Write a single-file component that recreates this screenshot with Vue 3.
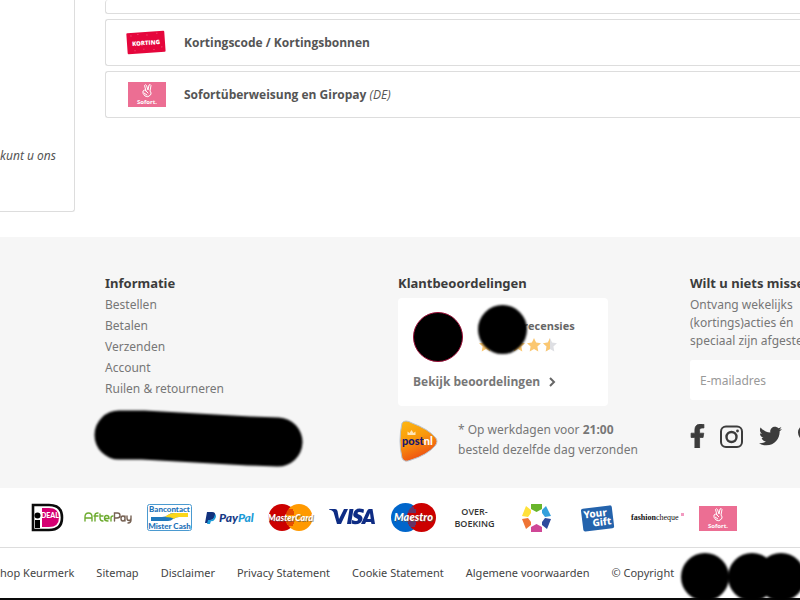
<script setup>
import { ref } from "vue";

const email = ref("");

const infoLinks = ["Bestellen", "Betalen", "Verzenden", "Account", "Ruilen & retourneren"];

const bottomLinks = [
  "hop Keurmerk",
  "Sitemap",
  "Disclaimer",
  "Privacy Statement",
  "Cookie Statement",
  "Algemene voorwaarden",
];

// star outline, 14x14
const star = "M7 0L9.100 4.600L14 5.200L10.400 8.600L11.300 13.500L7 11.100L2.700 13.500L3.600 8.600L0 5.200L4.900 4.600Z";
</script>

<template>
  <div class="page">
    <main class="top">
      <aside class="side">
        <em>kunt u ons</em>
      </aside>
      <ul class="methods">
        <li class="method first"></li>
        <li class="method">
          <svg width="40" height="25" viewBox="0 0 40 25">
            <g transform="rotate(-4 20 13)">
              <rect x="1" y="2" width="38" height="21" rx="1" fill="#e5063c" />
              <path d="M5 5h1M12 4h1M21 5h1M31 4h1M8 20h1M17 19h1M27 20h1M35 18h1" stroke="#f45f80" />
              <text x="20" y="15" text-anchor="middle" font-size="6" font-weight="800" fill="#fff">KORTING</text>
            </g>
          </svg>
          <strong>Kortingscode / Kortingsbonnen</strong>
        </li>
        <li class="method">
          <svg width="40" height="25" viewBox="0 0 40 25">
            <rect x="2" y="0" width="38" height="25" fill="#ec6e93" />
            <g fill="none" stroke="#fff" stroke-linecap="round" stroke-linejoin="round">
              <path d="M20 9L18.500 3.500Q19.500 2 20.500 3.500L22 8L23 3Q24.500 2 25 3.500L24 9Q26 11 24.500 13Q22 16 19 14Q16 11 17 9Q19 7 20 9L22 11M18 11L21 13" />
            </g>
            <text x="21" y="22" text-anchor="middle" font-size="6" font-weight="700" fill="#fff">Sofort.</text>
          </svg>
          <span><strong>Sofortüberweisung en Giropay</strong> <em>(DE)</em></span>
        </li>
      </ul>
    </main>

    <footer>
      <div class="columns">
        <section>
          <h3>Informatie</h3>
          <ul class="info">
            <li v-for="link in infoLinks" :key="link"><a href="#">{{ link }}</a></li>
          </ul>
          <svg class="pill" width="220" height="66" viewBox="0 0 220 66">
            <path d="M30 31L54 31L160 37L189 38" fill="none" stroke="#000" stroke-width="49" stroke-linecap="round" stroke-linejoin="round" />
          </svg>
        </section>

        <section>
          <h3>Klantbeoordelingen</h3>
          <div class="reviews">
            <div class="score">
              <div class="avatar"></div>
              <div class="rating">
                <strong>recensies</strong>
                <svg width="80" height="14" viewBox="0 0 80 14">
                  <g fill="#fbc770">
                    <path v-for="n in 4" :key="n" :d="star" :transform="`translate(${(n - 1) * 16} 0)`" />
                  </g>
                  <path :d="star" fill="#dedfe3" transform="translate(64 0)" />
                  <path d="M71 0L68.900 4.600L64 5.200L67.600 8.600L66.700 13.500L71 11.100Z" fill="#fbc770" />
                </svg>
              </div>
              <div class="dot"></div>
            </div>
            <a href="#" class="more">
              Bekijk beoordelingen
              <svg width="8" height="10" viewBox="0 0 8 10">
                <path d="M2 1L6 5L2 9" fill="none" stroke="#666" stroke-width="2" />
              </svg>
            </a>
          </div>
          <div class="shipping">
            <svg width="40" height="42" viewBox="0 0 40 42">
              <defs>
                <linearGradient id="post" x1="0" y1="0" x2="0.400" y2="1">
                  <stop offset="0" stop-color="#fdb813" />
                  <stop offset="0.500" stop-color="#f99a0c" />
                  <stop offset="1" stop-color="#ee4f12" />
                </linearGradient>
              </defs>
              <path d="M4 3Q7 -1 14 3Q30 9 37 17Q41 21 37 26Q29 35 13 40Q6 43 4 38Q0 21 4 3Z" fill="url(#post)" stroke="#b9c3d0" />
              <path d="M9.500 15V11.500L11.500 13L13.500 10L15.500 13L17.500 11.500V15Z" fill="#fde5b8" />
              <text x="4" y="25" font-size="11" font-weight="900" fill="#17176b" class="lato">post<tspan fill="#fff">nl</tspan></text>
            </svg>
            <p>* Op werkdagen voor <strong>21:00</strong><br />besteld dezelfde dag verzonden</p>
          </div>
        </section>

        <section class="newsletter">
          <h3>Wilt u niets missen?</h3>
          <p>Ontvang wekelijks<br />(kortings)acties én<br />speciaal zijn afgestemd</p>
          <input v-model="email" type="email" placeholder="E-mailadres" aria-label="E-mailadres" />
          <div class="social">
            <a href="#" aria-label="Facebook">
              <svg width="15" height="24" viewBox="0 0 320 512">
                <path d="M279.14 288l14.22-92.66h-88.91v-60.13c0-25.35 12.42-50.06 52.24-50.06h40.42V6.26S260.43 0 225.36 0c-73.22 0-121.08 44.38-121.08 124.72v70.62H22.89V288h81.39v224h100.17V288z" stroke="#3c3c3c" stroke-width="16" />
              </svg>
            </a>
            <a href="#" aria-label="Instagram">
              <svg width="24" height="24" viewBox="0 0 24 24">
                <rect x="1" y="2.500" width="21" height="20.500" rx="5" fill="none" stroke="#3c3c3c" stroke-width="2" />
                <circle cx="11.500" cy="13" r="5" fill="none" stroke="#3c3c3c" stroke-width="2.400" />
                <circle cx="17.500" cy="7" r="1.400" />
              </svg>
            </a>
            <a href="#" aria-label="Twitter">
              <svg width="23" height="24" viewBox="0 0 512 512">
                <path d="M459.37 151.716c.325 4.548.325 9.097.325 13.645 0 138.72-105.583 298.558-298.558 298.558-59.452 0-114.68-17.219-161.137-47.106 8.447.974 16.568 1.299 25.34 1.299 49.055 0 94.213-16.568 130.274-44.832-46.132-.975-84.792-31.188-98.112-72.772 6.498.974 12.995 1.624 19.818 1.624 9.421 0 18.843-1.3 27.614-3.573-48.081-9.747-84.143-51.98-84.143-102.985v-1.299c13.969 7.797 30.214 12.67 47.431 13.319-28.264-18.843-46.781-51.005-46.781-87.391 0-19.492 5.197-37.36 14.294-52.954 51.655 63.675 129.3 105.258 216.365 109.807-1.624-7.797-2.599-15.918-2.599-24.04 0-57.828 46.782-104.934 104.934-104.934 30.213 0 57.502 12.67 76.67 33.137 23.715-4.548 46.456-13.32 66.599-25.34-7.798 24.366-24.366 44.833-46.132 57.827 21.117-2.273 41.584-8.122 60.426-16.243-14.292 20.791-32.161 39.308-52.628 54.253z" />
              </svg>
            </a>
            <a href="#" aria-label="Pinterest">
              <svg width="20" height="24" viewBox="0 0 20 24">
                <path d="M4 13Q1 8 4 4.500Q8 0 14 2.500Q19 5 17 11Q15 17 10 15L8 22L6 23L8 9" fill="none" stroke="#3c3c3c" stroke-width="3" />
              </svg>
            </a>
          </div>
        </section>
      </div>

      <div class="payments">
        <!-- iDEAL -->
        <svg viewBox="0 0 57 32">
          <path d="M14 3H30Q43 3 43 15.500T30 28H14Z" fill="#fff" stroke="#0b0b0b" stroke-width="2.600" />
          <path d="M23 6H30Q40 6 40 15.500T30 25H23Z" fill="#d50072" />
          <circle cx="18.500" cy="13.500" r="3" />
          <rect x="16" y="18" width="5" height="8" />
          <text x="22" y="16" font-size="7" font-weight="900" fill="#fff" class="lato">DEAL</text>
        </svg>
        <!-- AfterPay -->
        <svg viewBox="0 0 57 32">
          <g fill="none" stroke="#6dab2f" stroke-width="1.400" stroke-linecap="round">
            <path d="M5 19V15Q5 11 8.500 11T12 15V19M5 16H12M15 19V13Q15 11 18 11M14 14H18M20 12V16Q20 19 23 19M20 14H23M24.500 16.500H29Q29 13.500 26.700 13.500T24.500 16.500Q24.500 19 28 19M31 19V16Q31 14 33 14" />
          </g>
          <g fill="none" stroke="#766254" stroke-width="1.400" stroke-linecap="round">
            <path d="M34.500 19V11H37.500Q40 11 40 13.500T37 16H34.500M45 14V19M45 16.500Q45 14 43 14T41 16.500T43 19T45 16.500M47 14V16Q47 18.500 49 18.500T51 16M51 14V18Q51 21 48 21" />
          </g>
        </svg>
        <!-- Bancontact -->
        <svg viewBox="0 0 57 32">
          <rect x="6.500" y="2.500" width="44" height="26" rx="2" fill="#fff" stroke="#4b9ad0" />
          <text x="28.500" y="10" text-anchor="middle" font-size="8" font-weight="900" fill="#1d72b8" class="lato">Bancontact</text>
          <path d="M10 15H21Q25 15 27 13T33 11H47V15H38Q34 15 32 17T27 19H10Z" fill="#1f78bd" />
          <path d="M24 15Q28 11 34 11H47V15H38Q35 15 33 17Q31 15 24 15Z" fill="#fbd61b" />
          <text x="28.500" y="27" text-anchor="middle" font-size="8" font-weight="900" fill="#1d72b8" class="lato">Mister Cash</text>
        </svg>
        <!-- PayPal -->
        <svg viewBox="0 0 57 32">
          <path d="M5 10H10Q14 10 13 14T8 18H7L6 21H3Z" fill="#12327e" />
          <path d="M13 12Q15 14 13 17T9 19L8 22H5L6 18H8Q12 18 13 12Z" fill="#1c9bd7" />
          <text x="17" y="20" font-size="12" font-weight="900" font-style="italic" fill="#173a86" class="lato">Pay<tspan fill="#1c9bd7">Pal</tspan></text>
        </svg>
        <!-- MasterCard -->
        <svg viewBox="0 0 57 32">
          <circle cx="19" cy="15.500" r="13.500" fill="#cc0000" />
          <circle cx="36" cy="15.500" r="13.500" fill="#ff9900" />
          <path d="M24 8H30M23 10H31M23 12H31M23 19H31M24 21H31M25 23H30" stroke="#cc0000" />
          <text x="27.500" y="19" text-anchor="middle" font-size="9" font-weight="900" font-style="italic" fill="#fff" class="lato shade">MasterCard</text>
        </svg>
        <!-- VISA -->
        <svg viewBox="0 0 57 32">
          <g fill="#0e2c84">
            <path d="M5 7H11Q13 7 13.500 9L15 17L20 7H24L17 22H13L9.500 10Q8.500 8 5 7.500Z" />
            <path d="M25.500 7H29.500L27 22H23Z" />
            <path d="M40 7.500L39.400 11Q34 9 33.500 11Q33 12 36 13Q39 14.500 38.400 17.500Q37 22.500 31 22.300Q29 22.200 27.500 21.500L28 18Q33 20 34 18Q34.600 17 32 16Q28.500 14.500 29.400 11.500Q31 6 37 6.700Q39 6.900 40 7.500Z" />
            <path fill-rule="evenodd" d="M45 7H48.500L51 22H47.500L47 20H42L41 22H37L43 9Q44 7 45 7ZM46 11L43.300 17H46.700Z" />
          </g>
        </svg>
        <!-- Maestro -->
        <svg viewBox="0 0 57 32">
          <circle cx="20.500" cy="15.500" r="14.500" fill="#0066cb" />
          <circle cx="36.500" cy="15.500" r="14.500" fill="#cc0000" />
          <path d="M25 6H29M24 8H31M23 10H31M23 20H31M24 22H31M25 24H30" stroke="#0066cb" />
          <text x="28.500" y="19" text-anchor="middle" font-size="11" font-weight="900" font-style="italic" fill="#fff" class="lato shade">Maestro</text>
        </svg>
        <!-- Overboeking -->
        <svg viewBox="0 0 57 32">
          <g font-size="9" font-weight="600" fill="#333" text-anchor="middle" class="open">
            <text x="28.500" y="13">OVER-</text>
            <text x="28.500" y="25">BOEKING</text>
          </g>
        </svg>
        <!-- gift card wheel -->
        <svg viewBox="0 0 57 32">
          <path d="M24 2H35V7L29.500 10L24 7Z" fill="#68b52b" />
          <path d="M39 4L44 14L38 15L35 11V8Z" fill="#34a0dc" />
          <path d="M44 17L40 27L35 23V20L38 16Z" fill="#2d4a9d" />
          <path d="M24 30H35V25L29.500 22L24 25Z" fill="#cf4796" />
          <path d="M19 27L15 17L21 16L24 20V23Z" fill="#ef7434" />
          <path d="M15 14L19 4L24 8V11L21 15Z" fill="#ffe13a" />
        </svg>
        <!-- YourGift -->
        <svg viewBox="0 0 57 32">
          <g transform="rotate(-7 29 16)">
            <rect x="14" y="5" width="31" height="23" rx="2" fill="#2463ac" />
            <g font-size="10" font-weight="800" fill="#fff">
              <text x="16" y="15">Your</text>
              <text x="24" y="24">Gift</text>
            </g>
          </g>
        </svg>
        <!-- fashioncheque -->
        <svg viewBox="0 0 57 32">
          <text x="2" y="18" font-size="8" class="serif" fill="#111"><tspan font-weight="700">fashion</tspan>cheque</text>
          <rect x="52" y="11" width="3" height="3" fill="#f29ac0" />
        </svg>
        <!-- Sofort -->
        <svg viewBox="0 0 57 32">
          <rect x="9" y="4" width="38" height="25" fill="#ec6e93" />
          <path d="M27 13L25.500 7.500Q26.500 6 27.500 7.500L29 12L30 7Q31.500 6 32 7.500L31 13Q33 15 31.500 17Q29 20 26 18Q23 15 24 13Q26 11 27 13L29 15M25 15L28 17" fill="none" stroke="#fff" stroke-linejoin="round" />
          <text x="28" y="26" text-anchor="middle" font-size="6" font-weight="700" fill="#fff">Sofort.</text>
        </svg>
      </div>

      <nav class="bottom">
        <a v-for="link in bottomLinks" :key="link" href="#">{{ link }}</a>
        <span class="copyright">
          © Copyright
          <svg class="dots" width="140" height="60" viewBox="0 0 140 60">
            <circle cx="30" cy="30" r="24" />
            <circle cx="77" cy="30" r="24" />
            <circle cx="106" cy="30" r="24" />
          </svg>
        </span>
      </nav>
    </footer>
  </div>
</template>

<style>
body {
  margin: 0;
  background: #fff;
}
</style>

<style scoped>
.page {
  overflow: hidden;
  font-family: "Noto Sans", "Open Sans", sans-serif;
  font-size: 12px;
  color: #777;
}

ul {
  list-style: none;
  margin: 0;
  padding: 0;
}

p {
  margin: 0;
}

a {
  color: inherit;
  text-decoration: none;
}

svg {
  display: block;
  flex-shrink: 0;
}

.top {
  display: flex;
  gap: 30px;
  padding-bottom: 25px;
  color: #555;
}

.side {
  box-sizing: border-box;
  width: 75px;
  padding: 146px 18px 46px 0;
  border: 1px solid #ddd;
  border-width: 0 1px 1px 0;
  border-radius: 0 0 3px 0;
  line-height: 19px;
  text-align: right;
  white-space: nowrap;
}

.methods {
  flex: 1;
  display: flex;
  flex-direction: column;
  gap: 5px;
  font-family: "Open Sans", sans-serif;
}

.method {
  display: flex;
  align-items: center;
  gap: 18px;
  padding: 10px 20px;
  border: 1px solid #ddd;
  border-right: 0;
  border-radius: 3px 0 0 3px;
  line-height: 25px;
}

.method.first {
  padding: 13px 0 0;
  border-top: 0;
}

.columns {
  display: grid;
  grid-template-columns: 263px 262px 1fr;
  gap: 30px;
  padding: 36px 0 18px 105px;
  background: #f6f6f6;
}

h3 {
  margin: 0;
  font-size: 13px;
  line-height: 20px;
  color: #3c3c3c;
  white-space: nowrap;
}

.info {
  margin-top: 1px;
  line-height: 21px;
}

.pill {
  margin: 5px 0 0 -16px;
  filter: blur(1px);
}

.reviews {
  box-sizing: border-box;
  width: 210px;
  margin: 5px 0 14px;
  padding: 14px 15px;
  border-radius: 4px;
  background: #fff;
  font-family: "Open Sans", sans-serif;
}

.score {
  position: relative;
  display: flex;
  gap: 16px;
}

.avatar {
  box-sizing: border-box;
  width: 50px;
  height: 50px;
  border: 1px solid #9c0f38;
  border-radius: 50%;
  background: #000;
}

.rating {
  display: flex;
  flex-direction: column;
  gap: 4px;
  padding-top: 6px;
  font-size: 11px;
  line-height: 16px;
  color: #666;
}

.rating strong {
  padding-left: 44px;
}

.dot {
  position: absolute;
  top: -7px;
  left: 65px;
  width: 49px;
  height: 49px;
  border-radius: 50%;
  background: #000;
  filter: blur(1px);
}

.more {
  display: flex;
  align-items: center;
  gap: 8px;
  margin-top: 10px;
  font-weight: 700;
  line-height: 20px;
}

.shipping {
  display: flex;
  gap: 20px;
  line-height: 20px;
}

.newsletter {
  white-space: nowrap;
}

.newsletter p {
  line-height: 18px;
  margin: 3px 0 10px;
}

input {
  box-sizing: border-box;
  width: 210px;
  height: 40px;
  padding: 0 10px;
  border: 0;
  border-radius: 3px;
  background: #fff;
  font: inherit;
  color: #777;
}

input::placeholder {
  color: #999;
}

.social {
  display: flex;
  gap: 15px;
  margin-top: 24px;
  fill: #3c3c3c;
}

.payments {
  display: flex;
  gap: 4px;
  padding: 14px 0 13px 19px;
  border-bottom: 1px solid #ddd;
}

.payments svg {
  width: 57px;
  height: 32px;
}

.lato {
  font-family: Lato, sans-serif;
}

.open {
  font-family: "Open Sans", sans-serif;
}

.shade {
  text-shadow: 1px 1px 0 #5559;
}

.serif {
  font-family: "Liberation Serif", serif;
}

.bottom {
  display: flex;
  gap: 22px;
  padding: 15px 0;
  border-bottom: 2px solid #0a0a0a;
  font-size: 11px;
  line-height: 20px;
  color: #444;
  white-space: nowrap;
}

.copyright {
  position: relative;
}

.dots {
  position: absolute;
  top: -16px;
  left: 64px;
  filter: blur(1px);
}
</style>
